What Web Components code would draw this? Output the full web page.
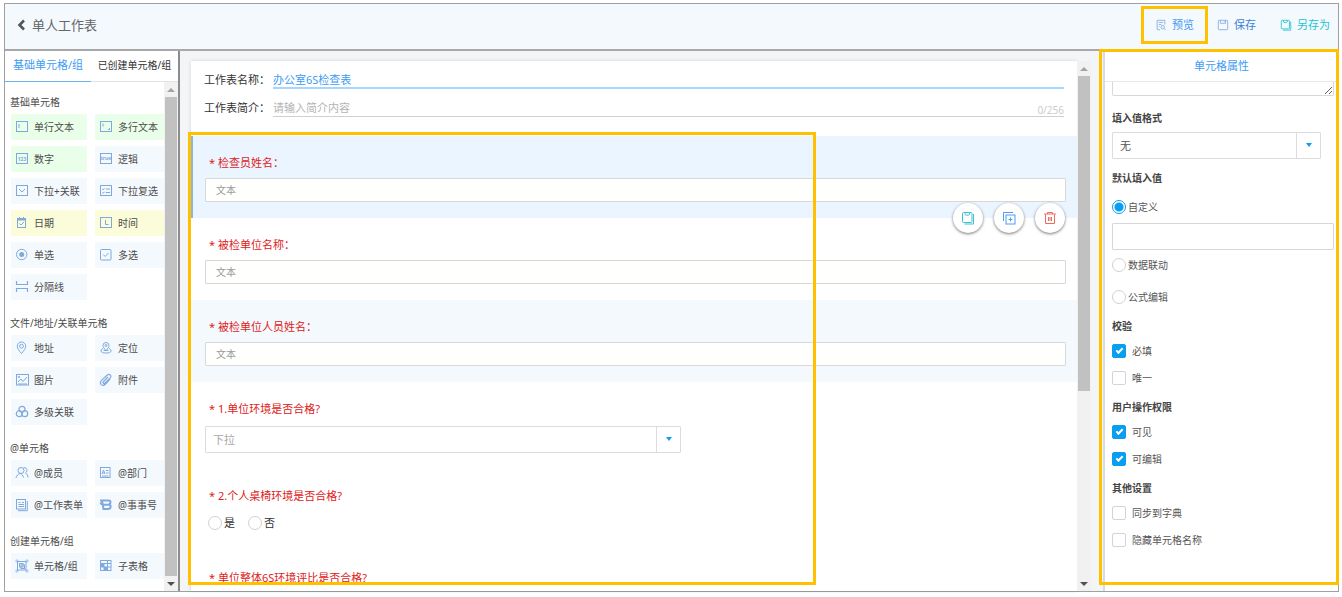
<!DOCTYPE html>
<html lang="zh-CN">
<head>
<meta charset="utf-8">
<meta name="viewport" content="width=device-width, initial-scale=1">
<title>单人工作表</title>
<style>
  html, body { height: 100%; }
  body {
    margin: 0;
    background: #fff;
    color: #4c4c4c;
    font: 10px/20px "Noto Sans", "Noto Sans CJK SC", sans-serif;
  }
</style>
</head>
<body>
<sheet-app></sheet-app>

<script>
const base = `
  :host { display: block; box-sizing: border-box; }
  :host([hidden]) { display: none; }
  *, *::before, *::after { box-sizing: border-box; }
  button, input, select, textarea { font: inherit; color: inherit; margin: 0; }
  button { background: none; border: 0; padding: 0; cursor: pointer; }
`;

function define(name, css, html) {
  customElements.define(name, class extends HTMLElement {
    connectedCallback() {
      if (this.shadowRoot) return;
      const root = this.attachShadow({ mode: 'open' });
      const body = typeof html === 'function' ? html(this) : html;
      root.innerHTML = `<style>${base}${css}</style>${body}`;
    }
  });
}

/* Line icons on a 14 x 14 grid. */
const box = '<rect x="1.5" y="1.5" width="11" height="10"/>';
const icons = {
  single: box + '<path d="M4 4v4"/>',
  multi: box + '<path d="M4 3.5v3M9 9.5h1.5V8"/>',
  number: box + '<text x="7" y="8.5" text-anchor="middle" font-size="5" font-weight="700">123</text>',
  logic: box + '<text x="7" y="8" text-anchor="middle" font-size="5" font-weight="700">true</text>',
  drop: box + '<path d="M4 5l3 3 3-3"/>',
  droplist: box + '<path d="M3.2 5l.9.9L5.5 4.3M3.2 8.5l.9.9L5.5 7.8M6.8 5H11M6.8 8.5H11"/>',
  date: '<rect x="2.5" y="2.5" width="8" height="9"/><path d="M2.5 3.5h8" stroke-width="2"/><path d="M4.5 1v2M8.5 1v2M4.5 7.5l1.500 1.500 3-3"/>',
  time: box + '<path d="M6.5 4v4.5h3"/>',
  radio: '<circle cx="6.7" cy="6.5" r="5.2"/><circle cx="6.7" cy="6.5" r="2.5" fill="currentColor" stroke="none"/>',
  check: '<rect x="1.5" y="1.5" width="10.5" height="10.5" rx="1"/><path d="M4.2 6.5l2 2 3.3-3.5"/>',
  divider: '<path d="M1.500 1v3.500M12.500 1v3.500M1 4.500h12M1 8.500h12M1.500 8.500V12M12.500 8.500V12" stroke-width="1.2"/>',
  pin: '<path d="M6.5 12.5C4 9.5 2.3 7.5 2.3 5.2a4.2 4.2 0 018.4 0c0 2.3-1.7 4.3-4.2 7.3z"/><circle cx="6.5" cy="5.2" r="1.9"/>',
  locate: '<path d="M7 9.5C5 7.5 4 6 4 4.5a3 3 0 016 0C10 6 9 7.500 7 9.5z"/><circle cx="7" cy="4.5" r="1"/><path d="M4 7.5C2.5 8 2 9 2 10c0 1.5 2 2 5 2s5-.5 5-2c0-1-.5-2-2-2.5M4.5 9.5h5"/>',
  image: '<rect x="1.5" y="1.5" width="12" height="10.5"/><path d="M3 9l3-3 2 2.5 4-4.5M3 11h9"/><circle cx="4" cy="4" r=".7"/>',
  clip: '<path d="M11 6l-4.500 5c-1.300 1.400-3 1.700-4.200.6-1.200-1.200-1-2.800.2-4.200L8 2.300c1-1 2.300-1.200 3.200-.4.9.9.7 2.200-.2 3.200L6.200 10c-.6.6-1.300.7-1.800.3-.5-.5-.4-1.200.2-1.800L9 4" stroke-width="1.2"/>',
  links: '<g stroke-width="1.2"><circle cx="7" cy="4.3" r="3"/><circle cx="4.3" cy="8.7" r="3"/><circle cx="9.7" cy="8.7" r="3"/></g>',
  member: '<circle cx="6" cy="4.5" r="3"/><path d="M1 12c.5-2.500 2-4 4-4.500 2 .5 3 2 3.500 4M8.500 1.700c2.200-.4 3.700 1 3.500 2.800-.1 1.300-.8 2-1.500 2.500 1.500.7 2.300 2.200 2.500 4.500"/>',
  dept: '<rect x="1.500" y="1.500" width="9.500" height="10"/><path d="M3 8l1.500-4L6 8M3.500 7h2M7 4.500h2.500M7 7h2.500M3 10h6.500"/>',
  form: '<rect x="1.500" y="1.500" width="9" height="9.500"/><path d="M12.300 3v9.700H3M3.500 4.500h2M7 4.500h2M3.500 6.500h5.500M3.500 8.500h5.500"/>',
  brand: '<path d="M1 2.500h8.500c2.800.1 2.600 3.500.2 4 2.800.4 2.500 4.500-.7 4.500H4.500L3 2.500M5.500 6.700h4.500M1.500 4.500c.5 2 1.500 2.300 4 2.200" stroke-width="2"/>',
  group: '<rect x="2.500" y="2.500" width="8.500" height="8.500"/><path d="M1 1h2v2H1zM11 1h2v2h-2zM1 11h2v2H1zM11 11h2v2h-2z" stroke-width=".6"/><rect x="4.500" y="4.500" width="3.500" height="3.500"/><rect x="6" y="6" width="3.500" height="3.500"/>',
  table: '<rect x="1.500" y="1.500" width="10.500" height="10"/><path d="M1.500 4.500H12M1.500 8H12M5 4.500v7M8.500 1.500v10"/><path d="M2 5h3v3H2zM5 8h3.500v3H5z" fill="currentColor" stroke="none"/>',
  preview: '<path d="M6 12.500H2.500v-11h9v5M4.500 4h5M4.500 6.500h3M4.500 9h1"/><circle cx="9" cy="9.500" r="2"/><path d="M10.500 11l2 2"/>',
  save: '<rect x="1.500" y="1.500" width="11" height="11" rx="1"/><path d="M4 1.500v3.500h6V1.500M8 3h1"/>',
  saveas: '<rect x="1.500" y="1.500" width="9.500" height="10" rx="1"/><path d="M4 1.500v2c0 1 4.500 1 4.500 0v-2M12.500 3v10H3.500"/>',
  copy: '<path d="M1.500 10V1.500H11"/><rect x="4" y="4" width="9" height="9"/><path d="M8.500 6.500v4M6.500 8.500h4"/>',
  trash: '<path d="M1 3h12M4.500 3V1.500h5V3M2.500 3.500v9h9v-9M5.500 6v4M7 6v4M8.500 6v4"/>',
  back: '<path d="M9 2.500L4.500 7 9 11.500" stroke-width="2.600"/>'
};

define('line-icon', `
  :host { display: inline-block; width: 14px; height: 14px; flex: none; color: #7fa9dd; }
  svg { display: block; width: 100%; height: 100%; fill: none; stroke: currentColor; stroke-width: 1; }
  text { fill: currentColor; stroke: none; }
`, el => `<svg viewBox="0 0 14 14" aria-hidden="true">${icons[el.getAttribute('name')]}</svg>`);

define('highlight-frame', `
  :host { position: absolute; border: 3px solid #ffc000; pointer-events: none; z-index: 5; }
`, '');

define('scroll-rail', `
  :host { display: flex; flex-direction: column; width: 14px; background: #f1f1f1; }
  .arrow { flex: none; height: 15px; display: grid; place-items: center; }
  .arrow::before { content: ""; border: 4px solid transparent; }
  .up::before { border-top: 0; border-bottom-color: #a3a3a3; }
  .down::before { border-bottom: 0; border-top-color: #505050; }
  .thumb { margin: 0 1px; background: #c1c1c1; flex: var(--thumb, 100) 1 0; }
  .rest { flex: var(--rest, 0) 1 0; }
`, `<span class="arrow up"></span><span class="thumb"></span><span class="rest"></span><span class="arrow down"></span>`);

/* Top bar */
define('top-bar', `
  :host {
    display: flex; align-items: center; height: 47px; padding: 0 8px 3px 10px;
    background: #f4f9fe; border-bottom: 2px solid #a8a8a8; font-size: 11px;
  }
  h1 { margin: 0; font-size: 13px; font-weight: 400; color: #666; flex: 1; }
  button { display: flex; align-items: center; }
  .back { margin-right: 3px; color: #555; }
  .back line-icon { color: #555; }
  .act { gap: 5px; }
  .act line-icon { width: 12px; height: 12px; }
  .preview { color: #4398f0; border: 3px solid #ffc000; height: 38px; padding: 0 11px; margin-right: 9px; }
  .save { color: #3a7fd8; margin-right: 24px; }
  .saveas { color: #25c3d0; }
  .saveas line-icon { color: #25c3d0; }
`, `
  <button class="back" aria-label="返回"><line-icon name="back"></line-icon></button>
  <h1>单人工作表</h1>
  <button class="act preview"><line-icon name="preview"></line-icon>预览</button>
  <button class="act save"><line-icon name="save"></line-icon>保存</button>
  <button class="act saveas"><line-icon name="saveas"></line-icon>另存为</button>
`);

/* Left palette */
define('palette-item', `
  :host { background: #f4f9fe; }
  :host([tone="green"]) { background: #eaffe9; }
  :host([tone="yellow"]) { background: #fbfcd9; }
  button { display: flex; align-items: center; gap: 5px; width: 100%; height: 26px; padding-left: 4px; white-space: nowrap; }
`, el => `<button><line-icon name="${el.getAttribute('icon')}"></line-icon><slot></slot></button>`);

define('palette-group', `
  h2 { margin: 0 0 2px -1px; font-size: 10px; line-height: 20px; font-weight: 400; }
  .grid { display: grid; grid-template-columns: 76px 76px; gap: 6px 8px; }
`, el => `<h2>${el.getAttribute('heading')}</h2><div class="grid"><slot></slot></div>`);

const groups = [
  ['基础单元格', [
    ['single', '单行文本', 'green'], ['multi', '多行文本', 'green'],
    ['number', '数字', 'green'], ['logic', '逻辑'],
    ['drop', '下拉+关联'], ['droplist', '下拉复选'],
    ['date', '日期', 'yellow'], ['time', '时间', 'yellow'],
    ['radio', '单选'], ['check', '多选'], ['divider', '分隔线']]],
  ['文件/地址/关联单元格', [
    ['pin', '地址'], ['locate', '定位'], ['image', '图片'], ['clip', '附件'], ['links', '多级关联']]],
  ['@单元格', [
    ['member', '@成员'], ['dept', '@部门'], ['form', '@工作表单'], ['brand', '@事事号']]],
  ['创建单元格/组', [['group', '单元格/组'], ['table', '子表格']]]
];

define('cell-palette', `
  :host { display: flex; flex-direction: column; min-height: 0; border-right: 2px solid #8c8c8c; background: #fff; }
  nav { display: flex; flex: none; height: 31px; }
  nav button { border-bottom: 1px solid #e2e2e2; white-space: nowrap; flex: 1; padding-bottom: 2px; color: #333; }
  nav button[aria-selected="true"] { flex: none; width: 86px; font-size: 11px; color: #3d9bf2; border-color: #6cb2ee; }
  .pane { display: flex; flex: 1; min-height: 0; }
  .list { display: grid; align-content: start; gap: 13px; flex: 1; min-width: 0; overflow: hidden; padding: 10px 0 0 6px; }
  scroll-rail { flex: none; }
`, `
  <nav role="tablist">
    <button role="tab" aria-selected="true">基础单元格/组</button>
    <button role="tab" aria-selected="false">已创建单元格/组</button>
  </nav>
  <div class="pane">
    <div class="list">${groups.map(([h, items]) => `<palette-group heading="${h}">${items.map(([i, t, c]) =>
      `<palette-item icon="${i}" tone="${c || ''}">${t}</palette-item>`).join('')}</palette-group>`).join('')}</div>
    <scroll-rail></scroll-rail>
  </div>
`);

/* Shared control looks */
const selectCss = `
  .select { position: relative; display: block; background: #fff; }
  .select select {
    appearance: none; display: block; width: 100%; height: 27px; padding: 0 7px; font-size: 11px;
    background: transparent; border: 1px solid #dcdcdc; border-radius: 1px;
  }
  .select::after {
    content: ""; position: absolute; inset: 1px 1px 1px auto; width: 24px; border-left: 1px solid #dcdcdc; pointer-events: none;
  }
  .select::before {
    content: ""; position: absolute; right: 9px; top: 11px; border: 3px solid transparent; border-top: 4px solid #0aa0f0; border-bottom: 0; pointer-events: none;
  }
`;
const radioCss = `
  input[type="radio"] { appearance: none; flex: none; width: 14px; height: 14px; border: 1px solid #d0d0d0; border-radius: 50%; background: #fff; }
  input[type="radio"]:checked { border-color: #0a9ef0; background: radial-gradient(circle, #0a9ef0 4px, #fff 5px); }
`;

/* One question of the sheet */
define('sheet-field', `
  :host { position: relative; padding: 17px 11px 16px 14px; background: #fff; }
  :host([tint]) { background: #f4f9fe; }
  :host([active]) { background: #ebf5ff; box-shadow: inset 2px 0 #8ab4e4; z-index: 1; }
  .title { display: block; margin: 0 4px 5px; font-size: 11px; line-height: 20px; color: #e02020; }
  input[type="text"] { display: block; width: 100%; height: 24px; padding: 0 10px; background: #fffffd; border: 1px solid #d8d8d8; border-radius: 1px; }
  ::placeholder { color: #999; opacity: 1; }
  .select { width: 476px; max-width: 100%; margin-top: 7px; color: #aaa; }
  .choices { display: flex; gap: 13px; padding: 2px 3px; font-size: 11px; color: #333; }
  .choices label { display: flex; align-items: center; gap: 2px; }
  .actions { position: absolute; right: 12px; bottom: -15px; display: flex; gap: 11px; }
  .actions button { width: 30px; height: 30px; border-radius: 50%; background: #fff; box-shadow: 0 1px 3px #0008; display: grid; place-items: center; }
  .teal { color: #3cc3d3; } .blue { color: #4b9cf5; } .red { color: #ea6b62; }
  ${selectCss}${radioCss}
`, el => {
  const title = `* ${el.getAttribute('heading')}`;
  const kind = el.getAttribute('kind');
  if (kind === 'select') return `<label class="title" for="c">${title}</label>
    <span class="select"><select id="c"><option>下拉</option></select></span>`;
  if (kind === 'radio') return `<span class="title" id="t">${title}</span>
    <div class="choices" role="radiogroup" aria-labelledby="t">
      <label><input type="radio" name="r">是</label><label><input type="radio" name="r">否</label></div>`;
  if (kind === 'heading') return `<span class="title">${title}</span>`;
  return `<label class="title" for="c">${title}</label><input type="text" id="c" placeholder="文本">
    ${el.hasAttribute('active') ? `<div class="actions">
      <button aria-label="存为单元格"><line-icon class="teal" name="saveas"></line-icon></button>
      <button aria-label="复制"><line-icon class="blue" name="copy"></line-icon></button>
      <button aria-label="删除"><line-icon class="red" name="trash"></line-icon></button></div>` : ''}`;
});

define('sheet-canvas', `
  :host { position: relative; display: flex; min-width: 0; min-height: 0; padding: 10px 12px 0 11px; background: #f4f5f7; }
  .card { flex: 1; min-width: 0; overflow: hidden; background: #fff; box-shadow: 0 0 4px #0002; }
  .meta { display: grid; grid-template-columns: 66px 1fr; gap: 9px 3px; padding: 9px 13px 19px; font-size: 11px; color: #333; }
  .meta label { height: 19px; line-height: 20px; }
  .line { display: flex; height: 19px; border-bottom: 2px solid #a6d5ff; color: #3d9bf2; }
  .line.brief { border-bottom: 1px solid #d0d0d0; color: #ccc; }
  .line input { flex: 1; min-width: 0; border: 0; padding: 2px 0 0; background: none; outline: 0; }
  .line span { align-self: end; font-size: 10px; line-height: 12px; }
  ::placeholder { color: #b4b4b4; opacity: 1; }
  scroll-rail { flex: none; --thumb: 63; --rest: 37; }
  highlight-frame { inset: 81px 287px 6px 8px; }
`, `
  <div class="card">
    <div class="meta">
      <label for="name">工作表名称：</label>
      <div class="line"><input id="name" value="办公室6S检查表"></div>
      <label for="brief">工作表简介：</label>
      <div class="line brief"><input id="brief" placeholder="请输入简介内容"><span>0/256</span></div>
    </div>
    <sheet-field active heading="检查员姓名："></sheet-field>
    <sheet-field heading="被检单位名称："></sheet-field>
    <sheet-field tint heading="被检单位人员姓名："></sheet-field>
    <sheet-field kind="select" heading="1.单位环境是否合格?"></sheet-field>
    <sheet-field kind="radio" heading="2.个人桌椅环境是否合格?"></sheet-field>
    <sheet-field kind="heading" heading="单位整体6S环境评比是否合格?"></sheet-field>
  </div>
  <scroll-rail></scroll-rail>
  <highlight-frame></highlight-frame>
`);

/* Right properties panel */
define('cell-properties', `
  :host { position: relative; display: flex; flex-direction: column; min-height: 0; border-left: 2px solid #d8dbdb; background: #fff; }
  h2 { flex: none; margin: 0; height: 31px; line-height: 29px; border-bottom: 1px solid #e8e8e8; text-align: center; font-size: 11px; font-weight: 400; color: #3d9bf2; }
  form { flex: 1; min-height: 0; overflow: hidden; padding: 0 4px 0 7px; color: #555; }
  textarea { display: block; width: 100%; height: 14px; margin-bottom: 12px; padding: 0; border: 1px solid #d8d8d8; border-top: 0; border-radius: 0 0 2px 2px; resize: vertical; overflow: hidden; }
  h3, .head { display: block; margin: 9px 0 4px; font-size: 10px; line-height: 20px; font-weight: 700; color: #444; }
  .select { margin-right: 13px; color: #555; }
  .option { display: flex; align-items: center; gap: 2px; line-height: 20px; }
  .radios { display: grid; gap: 12px; margin-top: 9px; }
  .custom { display: grid; gap: 6px; margin-bottom: -7px; }
  .custom input[type="text"] { width: 100%; height: 27px; border: 1px solid #d8d8d8; border-radius: 1px; }
  .checks { display: grid; gap: 7px; margin-top: 5px; }
  .checks .option { gap: 6px; }
  input[type="checkbox"] { appearance: none; flex: none; width: 14px; height: 14px; border: 1px solid #d4d4d4; border-radius: 2px; background: #fff; display: grid; place-items: center; }
  input[type="checkbox"]:checked { background: #0a9ef0; border-color: #0a9ef0; }
  input[type="checkbox"]:checked::before { content: ""; width: 7px; height: 4px; border: solid #fff; border-width: 0 0 2px 2px; transform: translateY(-1px) rotate(-45deg); }
  highlight-frame { inset: -2px -1px 6px -6px; }
  ${selectCss}${radioCss}
`, `
  <h2>单元格属性</h2>
  <form>
    <textarea aria-label="说明"></textarea>
    <label class="head" for="fmt">填入值格式</label>
    <span class="select"><select id="fmt"><option>无</option></select></span>
    <h3>默认填入值</h3>
    <div class="radios">
      <div class="custom">
        <label class="option"><input type="radio" name="def" checked>自定义</label>
        <input type="text" aria-label="自定义填入值">
      </div>
      <label class="option"><input type="radio" name="def">数据联动</label>
      <label class="option"><input type="radio" name="def">公式编辑</label>
    </div>
    <h3>校验</h3>
    <div class="checks">
      <label class="option"><input type="checkbox" checked>必填</label>
      <label class="option"><input type="checkbox">唯一</label>
    </div>
    <h3>用户操作权限</h3>
    <div class="checks">
      <label class="option"><input type="checkbox" checked>可见</label>
      <label class="option"><input type="checkbox" checked>可编辑</label>
    </div>
    <h3>其他设置</h3>
    <div class="checks">
      <label class="option"><input type="checkbox">同步到字典</label>
      <label class="option"><input type="checkbox">隐藏单元格名称</label>
    </div>
  </form>
  <highlight-frame></highlight-frame>
`);

define('sheet-app', `
  :host { height: 100vh; padding: 3px 3px 5px 4px; }
  .frame { display: flex; flex-direction: column; height: 100%; border: 1px solid #a0a0a0; }
  top-bar { flex: none; }
  main { flex: 1; min-height: 0; display: grid; grid-template: minmax(0, 1fr) / 175px minmax(0, 1fr) 235px; }
`, `
  <div class="frame">
    <top-bar></top-bar>
    <main>
      <cell-palette></cell-palette>
      <sheet-canvas></sheet-canvas>
      <cell-properties></cell-properties>
    </main>
  </div>
`);
</script>
</body>
</html>
